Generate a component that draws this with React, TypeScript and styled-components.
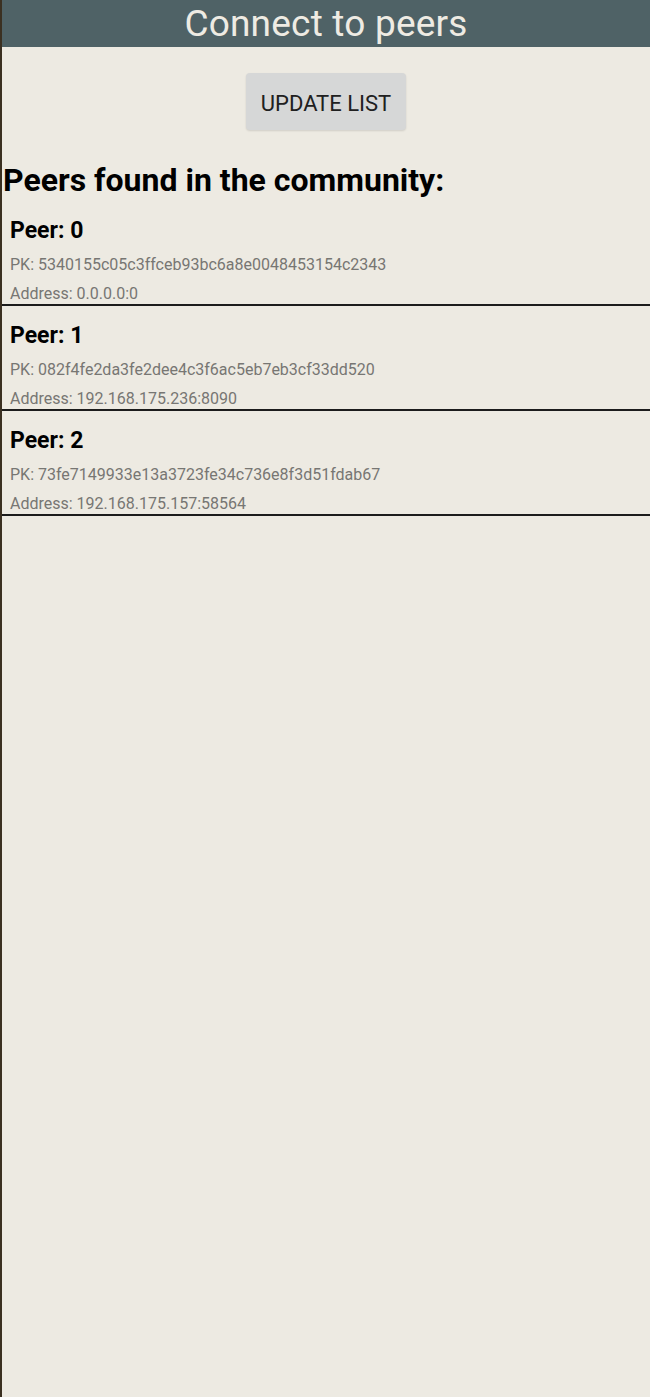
import React from "react";
import styled, { createGlobalStyle } from "styled-components";

const Global = createGlobalStyle`
  html, body { margin: 0; padding: 0; background: #edeae2; }
  body { font-family: Roboto, "Noto Sans", sans-serif; }
`;

const Screen = styled.div`
  min-height: 1397px;
  box-sizing: border-box;
  border-left: 2px solid #3b3021;
  background: #edeae2;
  display: flex;
  flex-direction: column;
`;

const Header = styled.header`
  height: 47px;
  background: #4f6266;
  color: #eeebe3;
  font-size: 37px;
  font-weight: 400;
  display: flex;
  align-items: center;
  justify-content: center;
  letter-spacing: 0.2px;
`;

const ButtonRow = styled.div`
  display: flex;
  justify-content: center;
  padding-top: 26px;
`;

const UpdateButton = styled.button`
  width: 160px;
  height: 57px;
  border: none;
  border-radius: 4px;
  background: #d6d7d7;
  color: #202020;
  font-family: Roboto, sans-serif;
  font-size: 22px;
  font-weight: 400;
  box-shadow: 0 1px 2px rgba(0, 0, 0, 0.12);
  padding: 3px 0 0 0;
`;

const Heading = styled.h2`
  margin: 32px 0 3px 1px;
  font-size: 32px;
  line-height: 36px;
  font-weight: 700;
  color: #000;
`;

const List = styled.div`
  display: flex;
  flex-direction: column;
`;

const Row = styled.div`
  padding: 17px 8px 0 8px;
  border-bottom: 2px solid #1c1c1c;
  display: flex;
  flex-direction: column;
`;

const PeerTitle = styled.div`
  font-size: 23px;
  line-height: 26px;
  font-weight: 700;
  color: #000;
  margin-bottom: 11px;
`;

const Detail = styled.div<{ $gap?: number }>`
  font-size: 16px;
  line-height: 20px;
  color: #777673;
  margin-bottom: ${(p) => p.$gap ?? 0}px;
`;

const peers = [
  { pk: "5340155c05c3ffceb93bc6a8e0048453154c2343", addr: "0.0.0.0:0" },
  { pk: "082f4fe2da3fe2dee4c3f6ac5eb7eb3cf33dd520", addr: "192.168.175.236:8090" },
  { pk: "73fe7149933e13a3723fe34c736e8f3d51fdab67", addr: "192.168.175.157:58564" },
];

export default function App() {
  return (
    <>
      <Global />
      <Screen>
        <Header>Connect to peers</Header>
        <ButtonRow>
          <UpdateButton>UPDATE LIST</UpdateButton>
        </ButtonRow>
        <Heading>Peers found in the community:</Heading>
        <List>
          {peers.map((p, i) => (
            <Row key={i}>
              <PeerTitle>Peer: {i}</PeerTitle>
              <Detail $gap={9}>PK: {p.pk}</Detail>
              <Detail>Address: {p.addr}</Detail>
            </Row>
          ))}
        </List>
      </Screen>
    </>
  );
}
